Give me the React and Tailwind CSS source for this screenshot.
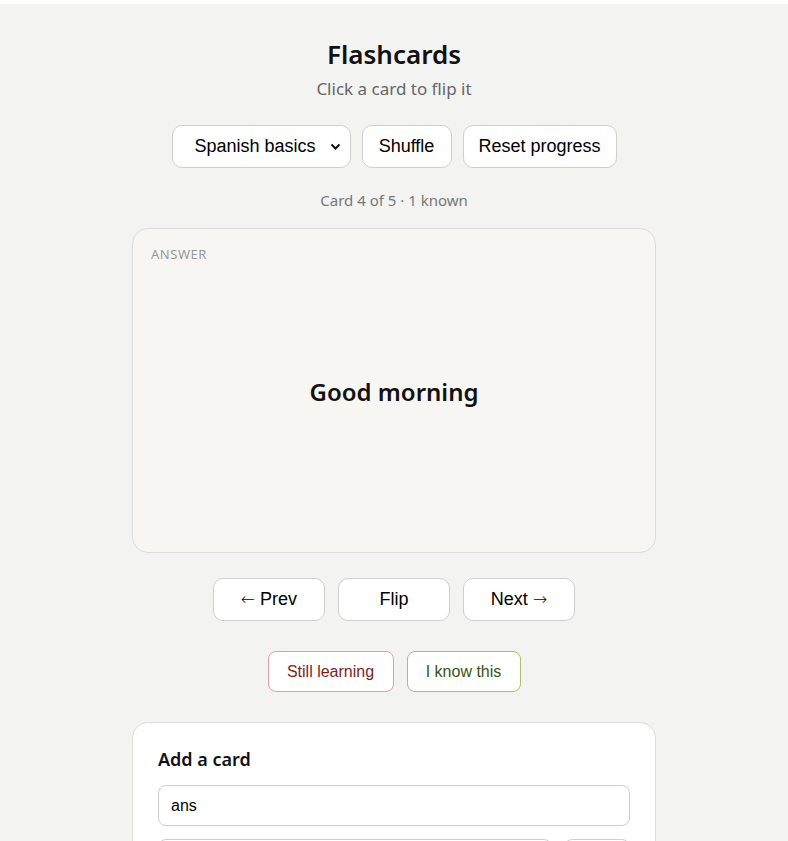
import React, { useState } from "react";

const uiFont = { fontFamily: '"Noto Sans", "Open Sans", sans-serif' };

function Arrow({ children }) {
  return <span className="font-['DejaVu_Sans',sans-serif] text-[17px] font-light">{children}</span>;
}

export default function App() {
  const [flipped, setFlipped] = useState(true);

  return (
    <div className="min-h-screen bg-white pt-[4px]">
      <div className="min-h-[837px] bg-[#f3f3f2] px-4 pt-[33px] pb-10" style={uiFont}>
        <div className="mx-auto w-[524px]">
          <h1 className="text-center text-[26px] font-semibold leading-[34px] text-[#111]">Flashcards</h1>
          <p className="mt-[6px] text-center text-[17px] leading-[24px] text-[#666]">Click a card to flip it</p>

          <div className="mt-[24px] flex justify-center gap-[11px] font-['Liberation_Sans',Arial,sans-serif] text-[18px] text-black">
            <div className="relative">
              <select className="h-[43px] w-[179px] appearance-none rounded-[10px] border border-[#cfcfcf] bg-white pl-[22px] pr-[30px] text-[18px] text-black">
                <option>Spanish basics</option>
              </select>
              <svg className="pointer-events-none absolute right-[10px] top-[18px]" width="11" height="8" viewBox="0 0 11 8">
                <path d="M1.5 1.5 L5.5 5.5 L9.5 1.5" fill="none" stroke="#111" strokeWidth="2" />
              </svg>
            </div>
            <button className="h-[43px] w-[90px] rounded-[10px] border border-[#cfcfcf] bg-white">Shuffle</button>
            <button className="h-[43px] w-[154px] rounded-[10px] border border-[#cfcfcf] bg-white">Reset progress</button>
          </div>

          <p className="mt-[21px] text-center text-[15px] leading-[22px] text-[#777]">Card 4 of 5 · 1 known</p>

          <div
            onClick={() => setFlipped(!flipped)}
            className="mt-[17px] flex h-[325px] cursor-pointer flex-col rounded-[16px] border border-[#dcdcda] bg-[#f7f6f3] px-[18px] pt-[16px]"
          >
            <div className="text-[13px] tracking-[0.04em] leading-[18px] text-[#999]">{flipped ? "ANSWER" : "QUESTION"}</div>
            <div className="flex flex-1 items-center justify-center pb-[32px]">
              <span className="text-[24px] font-semibold text-[#111]">{flipped ? "Good morning" : "Buenos días"}</span>
            </div>
          </div>

          <div className="mt-[25px] flex justify-center gap-[13px] font-['Liberation_Sans',Arial,sans-serif] text-[18px] text-black">
            <button className="h-[43px] w-[112px] rounded-[10px] border border-[#cfcfcf] bg-white">
              <Arrow>←</Arrow> Prev
            </button>
            <button onClick={() => setFlipped(!flipped)} className="h-[43px] w-[112px] rounded-[10px] border border-[#cfcfcf] bg-white">Flip</button>
            <button className="h-[43px] w-[112px] rounded-[10px] border border-[#cfcfcf] bg-white">
              Next <Arrow>→</Arrow>
            </button>
          </div>

          <div className="mt-[30px] flex justify-center gap-[13px] font-['Liberation_Sans',Arial,sans-serif] text-[16px]">
            <button className="h-[41px] w-[126px] rounded-[8px] border border-[#e89ca3] bg-white text-[#7f1d1d]">Still learning</button>
            <button className="h-[41px] w-[114px] rounded-[8px] border border-[#a3c46a] bg-white text-[#365314]">I know this</button>
          </div>

          <div className="mt-[30px] rounded-[16px] border border-[#dcdcda] bg-white px-[25px] pt-[24px] pb-[24px]">
            <h2 className="text-[18px] font-semibold leading-[24px] text-[#111]">Add a card</h2>
            <input
              defaultValue="ans"
              className="mt-[14px] block h-[41px] w-full rounded-[8px] border border-[#cfcfcf] bg-white px-[12px] font-['Liberation_Sans',Arial,sans-serif] text-[16px] text-black outline-none"
            />
            <div className="mt-[13px] flex gap-[12px]">
              <input
                placeholder="Answer"
                className="block h-[41px] flex-1 rounded-[8px] border border-[#cfcfcf] bg-white px-[12px] font-['Liberation_Sans',Arial,sans-serif] text-[16px] text-black outline-none"
              />
              <button className="h-[41px] w-[66px] rounded-[8px] border border-[#cfcfcf] bg-white font-['Liberation_Sans',Arial,sans-serif] text-[16px]">Add</button>
            </div>
          </div>
        </div>
      </div>
    </div>
  );
}
